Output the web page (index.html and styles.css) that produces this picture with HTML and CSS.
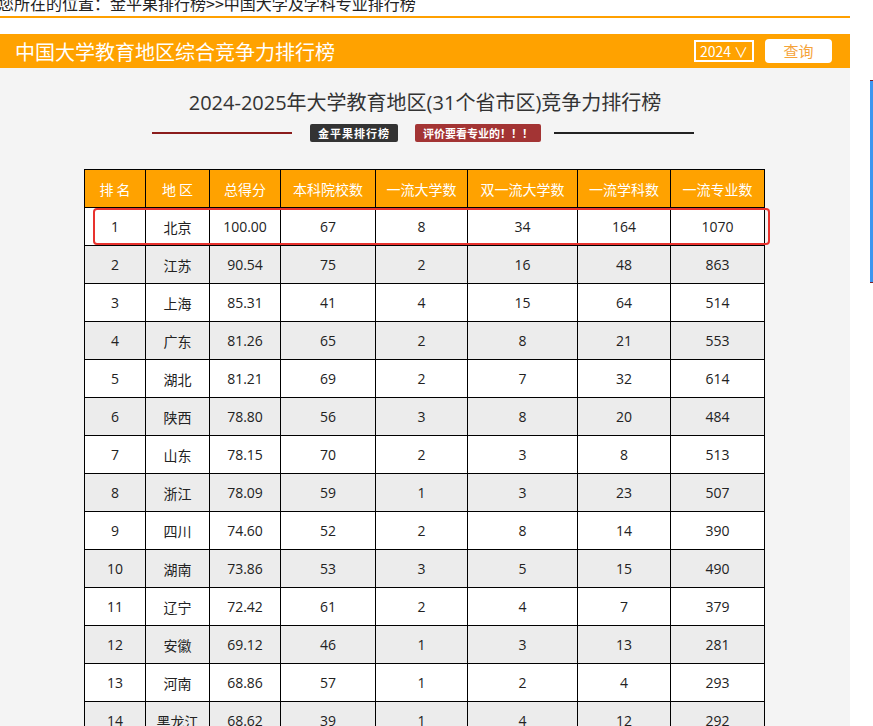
FILE: index.html
```html
<!DOCTYPE html>
<html lang="zh-CN">
<head>
<meta charset="utf-8">
<title>中国大学教育地区综合竞争力排行榜</title>
<link rel="stylesheet" href="styles.css">
</head>
<body>
<div class="page">
  <div class="crumb">您所在的位置：<a class="crumb-link">金平果排行榜</a>&gt;&gt;中国大学及学科专业排行榜</div>
  <div class="crumb-line"></div>
  <div class="bar">
    <h1 class="bar-title">中国大学教育地区综合竞争力排行榜</h1>
    <div class="bar-tools">
      <span class="year">2024 ∨</span>
      <button class="query">查询</button>
    </div>
  </div>
  <div class="content">
    <h2 class="title">2024-2025年大学教育地区(31个省市区)竞争力排行榜</h2>
    <div class="sub">
      <span class="line line-red"></span>
      <span class="tag tag-dark">金平果排行榜</span>
      <span class="tag tag-red">评价要看专业的！！！</span>
      <span class="line line-dark"></span>
    </div>
    <div class="table-wrap">
      <table class="rank">
        <colgroup>
          <col style="width:61px"><col style="width:64px"><col style="width:71px"><col style="width:95px"><col style="width:92px"><col style="width:110px"><col style="width:93px"><col style="width:94px">
        </colgroup>
        <thead>
          <tr><th>排 名</th><th>地 区</th><th>总得分</th><th>本科院校数</th><th>一流大学数</th><th>双一流大学数</th><th>一流学科数</th><th>一流专业数</th></tr>
        </thead>
        <tbody>
          <tr><td>1</td><td>北京</td><td>100.00</td><td>67</td><td>8</td><td>34</td><td>164</td><td>1070</td></tr>
          <tr><td>2</td><td>江苏</td><td>90.54</td><td>75</td><td>2</td><td>16</td><td>48</td><td>863</td></tr>
          <tr><td>3</td><td>上海</td><td>85.31</td><td>41</td><td>4</td><td>15</td><td>64</td><td>514</td></tr>
          <tr><td>4</td><td>广东</td><td>81.26</td><td>65</td><td>2</td><td>8</td><td>21</td><td>553</td></tr>
          <tr><td>5</td><td>湖北</td><td>81.21</td><td>69</td><td>2</td><td>7</td><td>32</td><td>614</td></tr>
          <tr><td>6</td><td>陕西</td><td>78.80</td><td>56</td><td>3</td><td>8</td><td>20</td><td>484</td></tr>
          <tr><td>7</td><td>山东</td><td>78.15</td><td>70</td><td>2</td><td>3</td><td>8</td><td>513</td></tr>
          <tr><td>8</td><td>浙江</td><td>78.09</td><td>59</td><td>1</td><td>3</td><td>23</td><td>507</td></tr>
          <tr><td>9</td><td>四川</td><td>74.60</td><td>52</td><td>2</td><td>8</td><td>14</td><td>390</td></tr>
          <tr><td>10</td><td>湖南</td><td>73.86</td><td>53</td><td>3</td><td>5</td><td>15</td><td>490</td></tr>
          <tr><td>11</td><td>辽宁</td><td>72.42</td><td>61</td><td>2</td><td>4</td><td>7</td><td>379</td></tr>
          <tr><td>12</td><td>安徽</td><td>69.12</td><td>46</td><td>1</td><td>3</td><td>13</td><td>281</td></tr>
          <tr><td>13</td><td>河南</td><td>68.86</td><td>57</td><td>1</td><td>2</td><td>4</td><td>293</td></tr>
          <tr><td>14</td><td>黑龙江</td><td>68.62</td><td>39</td><td>1</td><td>4</td><td>12</td><td>292</td></tr>
        </tbody>
      </table>
      <div class="highlight"></div>
    </div>
  </div>
</div>
<div class="side-line"></div>
</body>
</html>
```
FILE: styles.css
```css
html, body {
  margin: 0;
  padding: 0;
  background: #ffffff;
  overflow: hidden;
}
body {
  font-family: "Open Sans", "Noto Sans CJK SC", sans-serif;
  color: #222;
  width: 873px;
  height: 726px;
  position: relative;
}
.page {
  width: 850px;
}
.crumb {
  margin-top: -9px;
  margin-left: -2px;
  height: 24px;
  line-height: 24px;
  font-size: 16px;
  color: #222;
  white-space: nowrap;
  font-family: "Noto Sans CJK SC", sans-serif;
}
.crumb-link {
  color: #222;
}
.crumb-line {
  height: 2px;
  background: #ffa000;
  margin-top: 1px;
}
.bar {
  margin-top: 16px;
  height: 34px;
  background: #ffa200;
  display: flex;
  align-items: center;
  justify-content: space-between;
  padding: 0 18px 0 15px;
}
.bar-title {
  margin: 0;
  font-family: "Noto Sans CJK SC", sans-serif;
  font-weight: normal;
  font-size: 20px;
  color: #ffffff;
}
.bar-tools {
  display: flex;
  align-items: center;
  gap: 11px;
}
.year {
  box-sizing: border-box;
  height: 22px;
  width: 60px;
  border: 2px solid #ffffff;
  color: #ffffff;
  font-size: 14px;
  line-height: 18px;
  text-align: center;
  font-family: "Noto Sans CJK SC", sans-serif;
}
.query {
  width: 67px;
  height: 24px;
  border: none;
  border-radius: 4px;
  background: #ffffff;
  color: #f5a33a;
  font-size: 15px;
  font-family: "Noto Sans CJK SC", sans-serif;
  padding: 0;
  line-height: 24px;
}
.content {
  background: #f4f4f4;
  height: 700px;
  padding-top: 18px;
}
.title {
  margin: 0;
  text-align: center;
  font-weight: normal;
  font-size: 20px;
  color: #333;
  line-height: 34px;
  font-family: "Open Sans", "Noto Sans CJK SC", sans-serif;
}
.sub {
  display: flex;
  align-items: center;
  justify-content: center;
  margin-top: 2px;
  height: 22px;
  padding-right: 4px;
}
.line {
  display: block;
  width: 140px;
  height: 2px;
}
.line-red { background: #8b1c1c; margin-right: 18px; }
.line-dark { background: #222; margin-left: 13px; }
.tag {
  font-family: "Noto Sans CJK SC", sans-serif;
  font-size: 11px;
  font-weight: bold;
  color: #fff;
  height: 18px;
  line-height: 18px;
  padding: 0 8px;
  border-radius: 2px;
}
.tag-dark { background: #333; letter-spacing: 1px; }
.tag-red { background: #a33434; margin-left: 17px; }
.table-wrap {
  position: relative;
  width: 681px;
  margin: 25px 0 0 84px;
}
.rank {
  border-collapse: collapse;
  table-layout: fixed;
  width: 681px;
  font-size: 14px;
}
.rank th, .rank td {
  border: 1px solid #000;
  text-align: center;
  height: 37px;
  padding: 0;
}
.rank th {
  background: #ffa200;
  color: #ffffff;
  font-weight: normal;
  font-family: "Noto Sans CJK SC", sans-serif;
  font-size: 14px;
}
.rank td {
  color: #222;
  font-family: "Open Sans", "Noto Sans CJK SC", sans-serif;
}
.rank tbody tr:nth-child(odd) td { background: #ffffff; }
.rank tbody tr:nth-child(even) td { background: #ececec; }
.highlight {
  position: absolute;
  left: 9px;
  top: 39px;
  width: 673px;
  height: 33px;
  border: 2px solid #e8322e;
  border-radius: 4px;
  pointer-events: none;
}
.side-line {
  position: absolute;
  left: 870px;
  top: 80px;
  width: 3px;
  height: 201px;
  background: #3c96f0;
  border-top: 1px solid #7a1f2a;
  border-bottom: 1px solid #7a1f2a;
}
```
